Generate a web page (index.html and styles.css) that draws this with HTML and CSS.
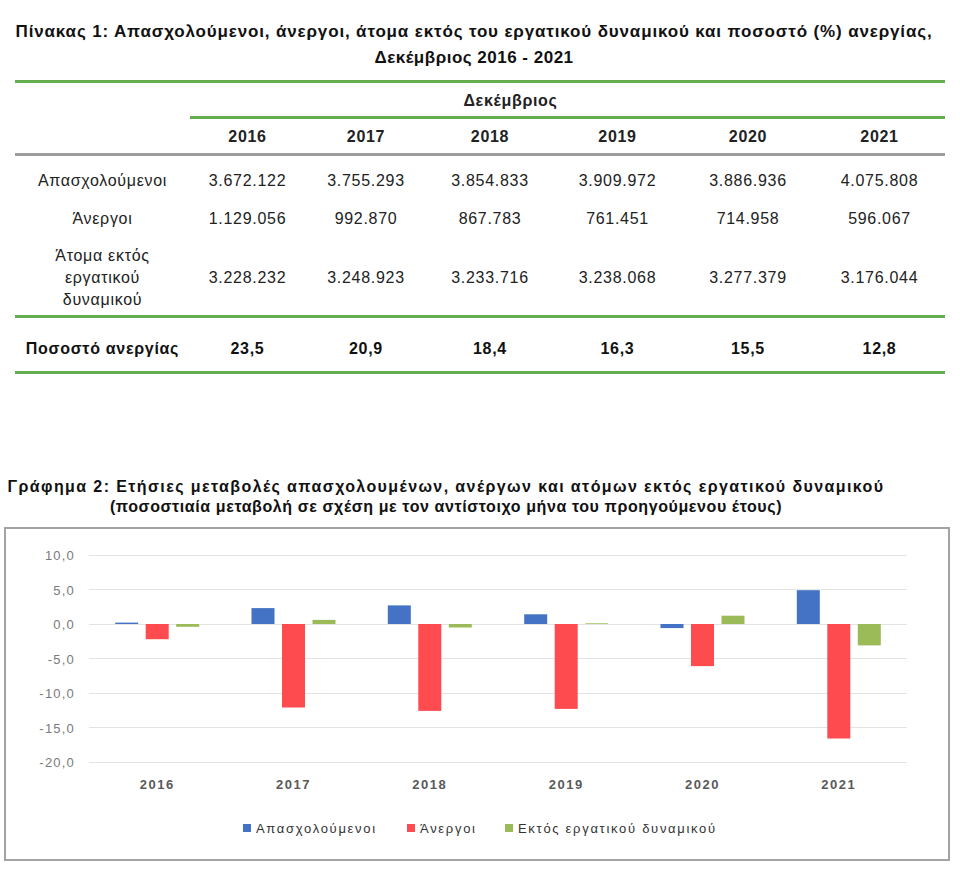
FILE: index.html
```html
<!DOCTYPE html>
<html lang="el">
<head>
<meta charset="utf-8">
<title>Πίνακας 1 - Γράφημα 2</title>
<link rel="stylesheet" href="styles.css">
</head>
<body>
<div class="page">
  <h1 class="title">
    <span class="line l1">Πίνακας 1: Απασχολούμενοι, άνεργοι, άτομα εκτός του εργατικού δυναμικού και ποσοστό (%) ανεργίας,</span>
    <span class="line l2">Δεκέμβριος 2016 - 2021</span>
  </h1>

  <table class="data">
    <colgroup>
      <col class="c-label"><col class="c1"><col class="c2"><col class="c3"><col class="c4"><col class="c5"><col class="c6">
    </colgroup>
    <thead>
      <tr class="row-month">
        <th></th>
        <th colspan="6" class="month">Δεκέμβριος</th>
      </tr>
      <tr class="row-years">
        <th class="blank"></th>
        <th>2016</th><th>2017</th><th>2018</th><th>2019</th><th>2020</th><th>2021</th>
      </tr>
    </thead>
    <tbody>
      <tr class="row-emp">
        <td>Απασχολούμενοι</td>
        <td>3.672.122</td><td>3.755.293</td><td>3.854.833</td><td>3.909.972</td><td>3.886.936</td><td>4.075.808</td>
      </tr>
      <tr class="row-unemp">
        <td>Άνεργοι</td>
        <td>1.129.056</td><td>992.870</td><td>867.783</td><td>761.451</td><td>714.958</td><td>596.067</td>
      </tr>
      <tr class="row-inactive">
        <td>Άτομα εκτός<br>εργατικού<br>δυναμικού</td>
        <td>3.228.232</td><td>3.248.923</td><td>3.233.716</td><td>3.238.068</td><td>3.277.379</td><td>3.176.044</td>
      </tr>
      <tr class="row-rate">
        <td>Ποσοστό ανεργίας</td>
        <td>23,5</td><td>20,9</td><td>18,4</td><td>16,3</td><td>15,5</td><td>12,8</td>
      </tr>
    </tbody>
  </table>

  <h2 class="chart-title">
    <span class="line l1">Γράφημα 2: Ετήσιες μεταβολές απασχολουμένων, ανέργων και ατόμων εκτός εργατικού δυναμικού</span>
    <span class="line l2">(ποσοστιαία μεταβολή σε σχέση με τον αντίστοιχο μήνα του προηγούμενου έτους)</span>
  </h2>

  <div class="chart">
    <svg class="chart-svg" width="942" height="330" viewBox="6 528 942 330" xmlns="http://www.w3.org/2000/svg">
      <g class="grid">
        <line x1="89" x2="907" y1="554.5" y2="554.5"/>
        <line x1="89" x2="907" y1="588.5" y2="588.5"/>
        <line x1="89" x2="907" y1="623.5" y2="623.5"/>
        <line x1="89" x2="907" y1="657.5" y2="657.5"/>
        <line x1="89" x2="907" y1="692.5" y2="692.5"/>
        <line x1="89" x2="907" y1="726.5" y2="726.5"/>
        <line x1="89" x2="907" y1="761.5" y2="761.5"/>
      </g>
      <g class="ylabels">
        <text x="75" y="559">10,0</text>
        <text x="75" y="593.5">5,0</text>
        <text x="75" y="628">0,0</text>
        <text x="75" y="662.5">-5,0</text>
        <text x="75" y="697">-10,0</text>
        <text x="75" y="731.5">-15,0</text>
        <text x="75" y="766">-20,0</text>
      </g>
      <g class="bars-emp">
        <rect x="115.2" y="621.6" width="23" height="1.4"/>
        <rect x="251.5" y="607.1" width="23" height="15.9"/>
        <rect x="387.8" y="604.4" width="23" height="18.6"/>
        <rect x="524.2" y="613.3" width="23" height="9.7"/>
        <rect x="660.5" y="623" width="23" height="4.1"/>
        <rect x="796.8" y="589.2" width="23" height="33.8"/>
      </g>
      <g class="bars-unemp">
        <rect x="145.7" y="623" width="23" height="15.2"/>
        <rect x="282" y="623" width="23" height="83.5"/>
        <rect x="418.3" y="623" width="23" height="86.9"/>
        <rect x="554.7" y="623" width="23" height="84.9"/>
        <rect x="691" y="623" width="23" height="42.1"/>
        <rect x="827.3" y="623" width="23" height="114.5"/>
      </g>
      <g class="bars-inact">
        <rect x="176.2" y="623" width="23" height="2.8"/>
        <rect x="312.5" y="618.9" width="23" height="4.1"/>
        <rect x="448.8" y="623" width="23" height="3.5"/>
        <rect x="585.2" y="622.3" width="23" height="0.7"/>
        <rect x="721.5" y="614.7" width="23" height="8.3"/>
        <rect x="857.8" y="623" width="23" height="21.4"/>
      </g>
      <g class="xlabels">
        <text x="157.2" y="788">2016</text>
        <text x="293.5" y="788">2017</text>
        <text x="429.8" y="788">2018</text>
        <text x="566.2" y="788">2019</text>
        <text x="702.5" y="788">2020</text>
        <text x="838.8" y="788">2021</text>
      </g>
      <g class="legend">
        <rect class="sw-emp" x="243" y="823" width="8" height="8"/>
        <text x="256" y="832">Απασχολούμενοι</text>
        <rect class="sw-unemp" x="407" y="823" width="8" height="8"/>
        <text x="420" y="832">Άνεργοι</text>
        <rect class="sw-inact" x="505" y="823" width="8" height="8"/>
        <text x="518" y="832">Εκτός εργατικού δυναμικού</text>
      </g>
    </svg>
  </div>
</div>
</body>
</html>
```

FILE: styles.css
```css
* { box-sizing: border-box; }

html, body {
  margin: 0;
  padding: 0;
  background: #ffffff;
}

body {
  font-family: "Liberation Sans", Arial, sans-serif;
  color: #1a1a1a;
  width: 960px;
  height: 891px;
  overflow: hidden;
}

.page {
  display: flex;
  flex-direction: column;
  padding-top: 19px;
}

.title {
  margin: 0;
  font-size: 17px;
  font-weight: bold;
  line-height: 26px;
  text-align: center;
  color: #111;
  display: flex;
  flex-direction: column;
  align-items: center;
  padding-right: 12px;
}

.title .line { display: block; white-space: nowrap; }
.title .l1 { letter-spacing: 0.85px; }
.title .l2 { letter-spacing: 0.5px; }

/* ---------- table ---------- */
.data {
  margin: 9px 0 0 15px;
  width: 930px;
  border-collapse: collapse;
  table-layout: fixed;
  font-size: 16px;
  letter-spacing: 0.7px;
  color: #222;
}

.c-label { width: 175px; }
.c1 { width: 115px; }
.c2 { width: 122px; }
.c3 { width: 126px; }
.c4 { width: 129px; }
.c5 { width: 132px; }
.c6 { width: 131px; }

.data th, .data td {
  text-align: center;
  padding: 0;
  line-height: 20px;
}

.row-month th {
  border-top: 3px solid #63ad4f;
  padding: 8px 0 5px;
  font-weight: bold;
}

.row-month .month { padding-right: 114px; }

.row-years th {
  border-top: 3px solid #63ad4f;
  border-bottom: 3px solid #9c9c9c;
  padding: 8px 0 6px;
  font-weight: bold;
}

.row-years th.blank { border-top: none; }

.row-emp td { padding: 15px 0 9px; }
.row-unemp td { padding: 9px 0 9px; }
.row-inactive td { padding: 7px 0 4px; line-height: 22px; }

.row-rate td {
  border-top: 3px solid #63ad4f;
  border-bottom: 3px solid #63ad4f;
  padding: 21px 0 12px;
  font-weight: bold;
  color: #111;
}

/* ---------- chart ---------- */
.chart-title {
  margin: 103px 0 0 0;
  font-size: 16px;
  font-weight: bold;
  line-height: 20px;
  color: #111;
  display: flex;
  flex-direction: column;
  align-items: center;
  padding-right: 68px;
}

.chart-title .line { display: block; white-space: nowrap; }
.chart-title .l1 { letter-spacing: 1.4px; }
.chart-title .l2 { letter-spacing: 0.6px; }

.chart {
  margin: 10px 0 0 4px;
  width: 946px;
  height: 334px;
  border: 2px solid #a3a3a3;
  background: #fff;
}

.chart-svg { display: block; }

.grid line {
  stroke: #e3e3e3;
  stroke-width: 1;
  shape-rendering: crispEdges;
}

.ylabels text {
  font-family: "Liberation Sans", Arial, sans-serif;
  font-size: 13px;
  fill: #7a7a7a;
  text-anchor: end;
  letter-spacing: 1.2px;
}

.xlabels text {
  font-family: "Liberation Sans", Arial, sans-serif;
  font-size: 13px;
  font-weight: bold;
  fill: #595959;
  text-anchor: middle;
  letter-spacing: 1.5px;
}

.bars-emp rect, .sw-emp { fill: #4472c4; }
.bars-unemp rect, .sw-unemp { fill: #fd4b4f; }
.bars-inact rect, .sw-inact { fill: #9bbb59; }

.legend text {
  font-family: "Liberation Sans", Arial, sans-serif;
  font-size: 13px;
  fill: #333333;
  letter-spacing: 1.7px;
}
```
